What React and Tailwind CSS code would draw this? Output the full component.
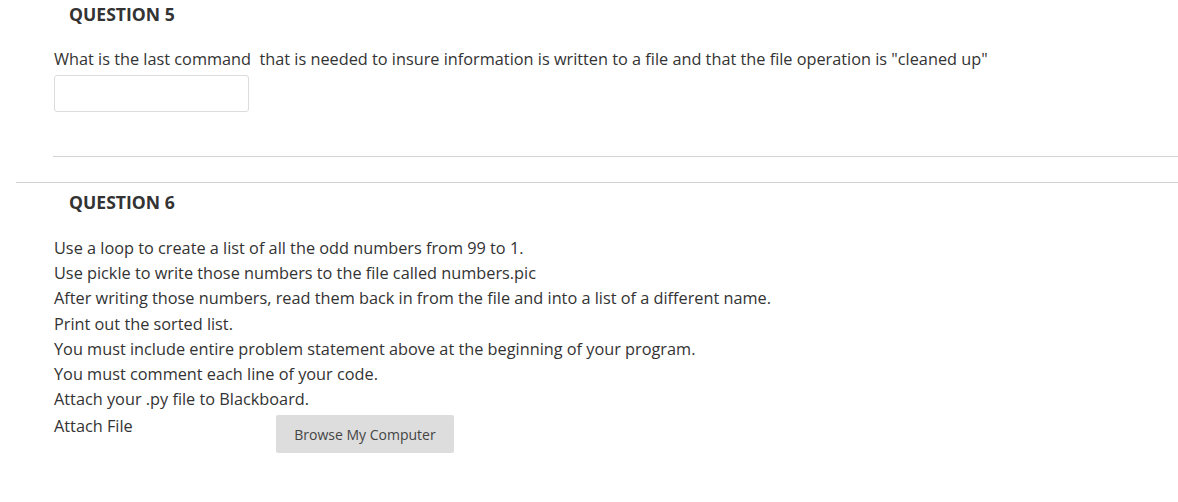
export default function App() {
  const lines = [
    "Use a loop to create a list of all the odd numbers from 99 to 1.",
    "Use pickle to write those numbers to the file called numbers.pic",
    "After writing those numbers, read them back in from the file and into a list of a different name.",
    "Print out the sorted list.",
    "You must include entire problem statement above at the beginning of your program.",
    "You must comment each line of your code.",
    "Attach your .py file to Blackboard.",
  ];

  return (
    <div
      className="w-[1178px] h-[502px] bg-white text-[#333333] overflow-hidden"
      style={{ fontFamily: '"Open Sans", sans-serif' }}
    >
      <div className="pl-[69px] pt-[1px] h-[26px] text-[17.6px] font-bold leading-[26px]">
        QUESTION 5
      </div>
      <div className="pl-[54px] pt-[20px]">
        <p className="text-[16.3px] leading-[26px]">
          What is the last command&nbsp; that is needed to insure information
          is written to a file and that the file operation is "cleaned up"
        </p>
        <input
          type="text"
          className="mt-[3px] w-[195px] h-[37px] border border-[#dcdcdc] rounded-[3px] block"
        />
      </div>
      <div className="ml-[53px] mt-[44px] border-t border-[#d3d3d3]" />
      <div className="ml-[16px] mt-[25px] border-t border-[#d3d3d3]" />
      <div className="pl-[69px] pt-[6px] h-[26px] text-[17.6px] font-bold leading-[26px]">
        QUESTION 6
      </div>
      <div className="pl-[54px] pt-[27px] text-[16.3px] leading-[25.2px]">
        {lines.map((l) => (
          <p key={l}>{l}</p>
        ))}
        <div className="flex items-start mt-[2px]">
          <span className="w-[222px]">Attach File</span>
          <button className="mt-[1px] w-[178px] h-[38px] bg-[#dddddd] rounded-[2px] text-[14px] text-[#444444]">
            Browse My Computer
          </button>
        </div>
      </div>
    </div>
  );
}
